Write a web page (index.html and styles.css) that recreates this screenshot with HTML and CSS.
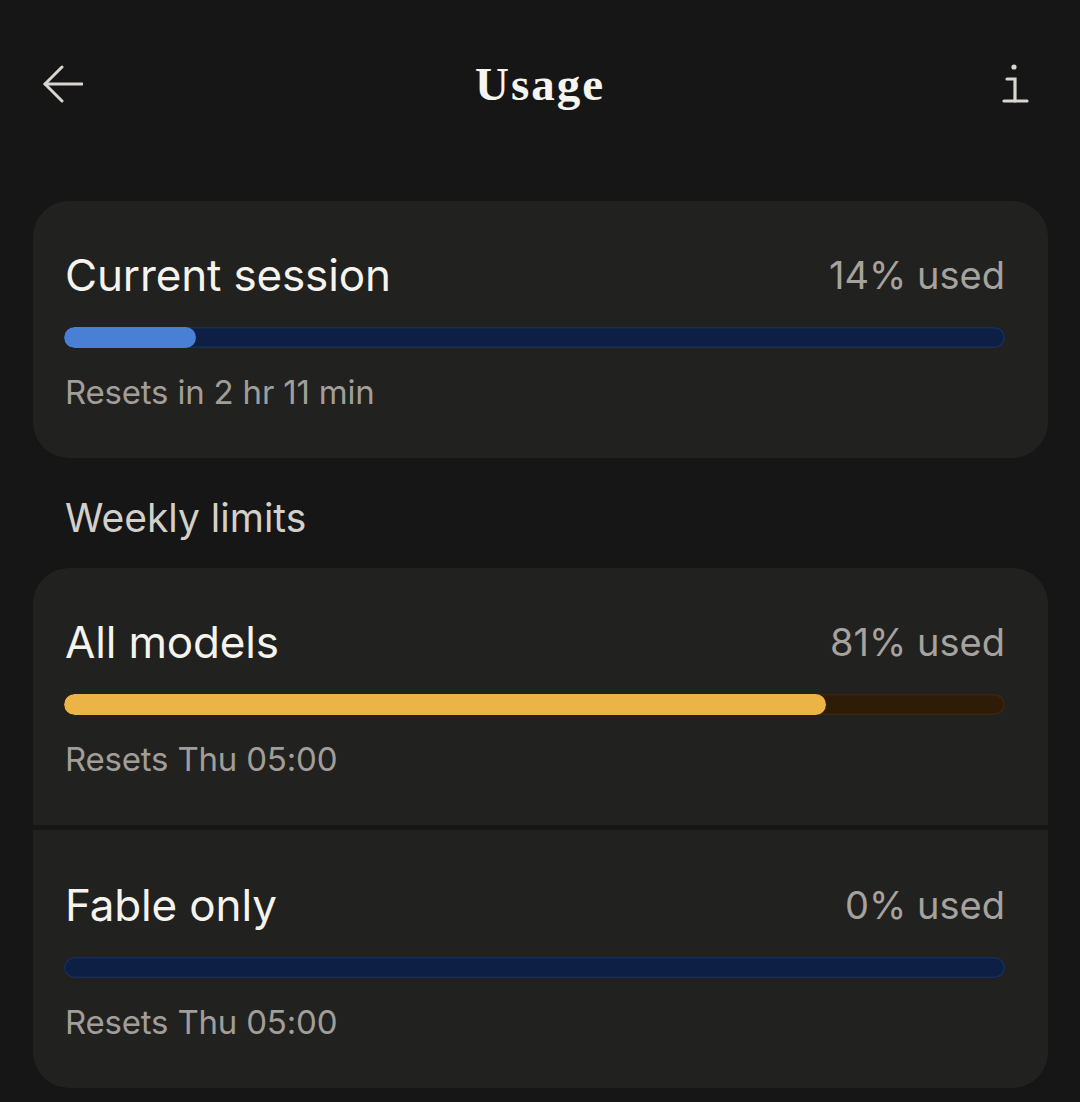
FILE: index.html
```html
<!DOCTYPE html>
<html lang="en">
<head>
<meta charset="utf-8">
<title>Usage</title>
<link rel="stylesheet" href="styles.css">
</head>
<body>
<div class="screen">
  <header class="topbar">
    <button class="icon-btn back" aria-label="Back">
      <svg width="40" height="40" viewBox="0 0 40 40" fill="none" stroke="#d9d6d0" stroke-width="3" stroke-linecap="round" stroke-linejoin="round">
        <path d="M39 20H2"/>
        <path d="M19 3L2 20L19 37"/>
      </svg>
    </button>
    <h1 class="title">Usage</h1>
    <button class="icon-btn info" aria-label="Info">
      <svg width="28" height="44" viewBox="0 0 28 44" fill="none" stroke="#d9d6d0" stroke-width="3.2" stroke-linecap="round">
        <circle cx="12" cy="6" r="2.6" fill="#d9d6d0" stroke="none"/>
        <path d="M5 18H13V40"/>
        <path d="M2 40H25"/>
      </svg>
    </button>
  </header>

  <main class="content">
    <section class="card card-single">
      <div class="row">
        <span class="label">Current session</span>
        <span class="pct">14% used</span>
      </div>
      <div class="bar bar-blue"><div class="fill" style="width:14%"></div></div>
      <div class="reset">Resets in 2 hr 11 min</div>
    </section>

    <h2 class="section-title">Weekly limits</h2>

    <div class="group">
      <section class="card card-top">
        <div class="row">
          <span class="label">All models</span>
          <span class="pct">81% used</span>
        </div>
        <div class="bar bar-amber"><div class="fill" style="width:81%"></div></div>
        <div class="reset">Resets Thu 05:00</div>
      </section>
      <section class="card card-bottom">
        <div class="row">
          <span class="label">Fable only</span>
          <span class="pct">0% used</span>
        </div>
        <div class="bar bar-blue"><div class="fill" style="width:0%"></div></div>
        <div class="reset">Resets Thu 05:00</div>
      </section>
    </div>
  </main>
</div>
</body>
</html>
```

FILE: styles.css
```css
* { box-sizing: border-box; }

html, body {
  margin: 0;
  padding: 0;
  background: #161616;
}

body {
  font-family: Inter, "Noto Sans", "Liberation Sans", sans-serif;
  color: #f3f1ec;
  width: 1080px;
  height: 1102px;
  overflow: hidden;
}

.screen {
  display: flex;
  flex-direction: column;
}

.topbar {
  display: flex;
  align-items: center;
  justify-content: space-between;
  height: 72px;
  margin-top: 48px;
  padding: 0 50px 0 43px;
  position: relative;
}

.icon-btn {
  background: none;
  border: 0;
  padding: 0;
  display: flex;
  align-items: center;
  justify-content: center;
}

.back { width: 40px; height: 40px; }
.info { width: 28px; height: 44px; margin-top: -2px; }

.title {
  margin: 0;
  font-family: "Liberation Serif", "DejaVu Serif", serif;
  font-weight: 700;
  font-size: 47px;
  line-height: 72px;
  color: #f6f4ef;
  letter-spacing: 2px;
  position: absolute;
  left: 0;
  right: 0;
  text-align: center;
  pointer-events: none;
}

.content {
  margin-top: 81px;
  padding: 0 32px 0 33px;
  display: flex;
  flex-direction: column;
}

.card {
  background: #212120;
  padding: 50px 43px 46px 31px;
  display: flex;
  flex-direction: column;
}

.card-single { border-radius: 36px; }
.card-top { border-radius: 36px 36px 0 0; padding-top: 50px; padding-bottom: 46px; }
.card-bottom { border-radius: 0 0 36px 36px; padding-top: 51px; padding-bottom: 46px; }

.group {
  display: flex;
  flex-direction: column;
  gap: 5px;
}

.row {
  display: flex;
  justify-content: space-between;
  align-items: center;
  height: 48px;
  padding-left: 1px;
}

.label {
  font-size: 44px;
  line-height: 48px;
  color: #f5f3ee;
  letter-spacing: -0.15px;
}

.pct {
  font-size: 38px;
  line-height: 48px;
  color: #a6a39e;
  letter-spacing: 0;
}

.bar {
  margin-top: 28px;
  height: 21px;
  border-radius: 11px;
  overflow: hidden;
}

.bar .fill {
  height: 100%;
  border-radius: 11px;
}

.bar-blue {
  background: #0d1f45;
  box-shadow: inset 0 0 0 1.5px #1a2d55;
}
.bar-blue .fill { background: #4a7fd6; }

.bar-amber {
  background: #2e1c06;
  box-shadow: inset 0 0 0 1.5px #3a2711;
}
.bar-amber .fill { background: #ecb446; }

.reset {
  margin-top: 24px;
  font-size: 33px;
  line-height: 40px;
  color: #a19e99;
  padding-left: 1px;
  letter-spacing: -0.2px;
}

.section-title {
  margin: 40px 0 30px 0;
  padding-left: 32px;
  font-weight: 400;
  font-size: 39px;
  line-height: 40px;
  color: #d3d0ca;
  letter-spacing: 0;
}
```
